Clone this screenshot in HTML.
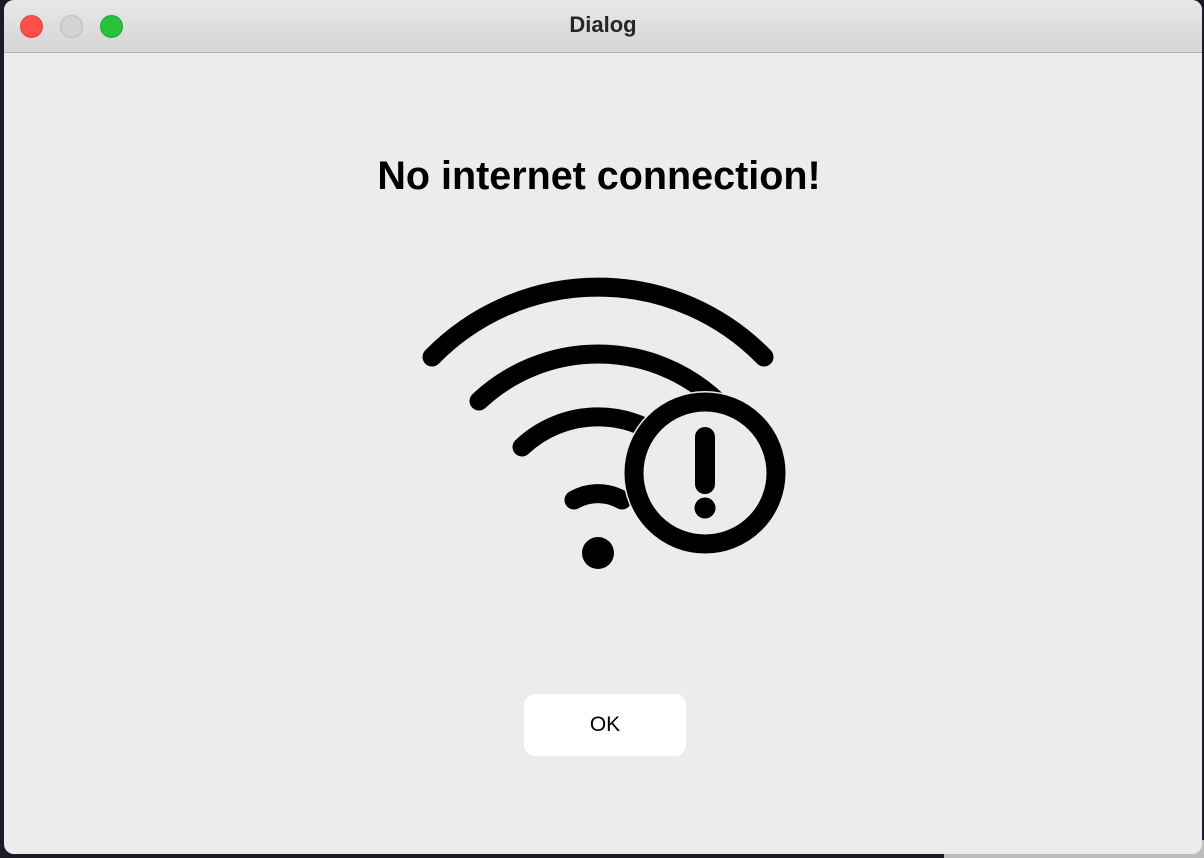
<!DOCTYPE html>
<html><head><meta charset="utf-8"><style>
html,body{margin:0;padding:0;width:1204px;height:858px;overflow:hidden;background:#1a1b26;}
.bg2{position:absolute;left:944px;top:840px;width:260px;height:18px;background:#bdbdbd;}
.win{position:absolute;left:4px;top:0;width:1198px;height:854px;background:#ececec;border-radius:10px;overflow:hidden;font-family:"Liberation Sans",sans-serif;}
.tb{position:absolute;left:0;top:0;width:100%;height:52px;background:linear-gradient(#e8e8e8,#d5d5d5);border-bottom:1px solid #b0b0b0;}
.tl{position:absolute;top:15px;width:23px;height:23px;border-radius:50%;box-sizing:border-box;}
.tt{position:absolute;left:0;width:100%;top:12px;text-align:center;font-weight:bold;font-size:22px;color:#262626;}
h1{position:absolute;left:0;width:1190px;top:154px;margin:0;text-align:center;font-size:39.5px;font-weight:bold;color:#000;}
.ok{position:absolute;left:520px;top:694px;width:162px;height:62px;background:#fff;border-radius:11px;text-align:center;line-height:62px;font-size:21px;color:#000;}
svg{position:absolute;left:0;top:0;}
</style></head><body>
<div class="bg2"></div>
<div class="win">
<div class="tb">
<div class="tl" style="left:16px;background:#fe4f4a;border:1px solid #e0443e"></div>
<div class="tl" style="left:56px;background:#d3d3d3;border:1px solid #bcbcbc"></div>
<div class="tl" style="left:96px;background:#29c23b;border:1px solid #1fa72f"></div>
<div class="tt">Dialog</div>
</div>
<h1>No internet connection!</h1>
<svg width="1198" height="854" viewBox="4 0 1198 854">
<g fill="none" stroke="#000" stroke-width="19" stroke-linecap="round">
<path d="M432 357 A232 232 0 0 1 764 357"/>
<path d="M479 401 A174 174 0 0 1 717 401"/>
<path d="M522 447 A111 111 0 0 1 674 447"/>
<path d="M574 500 A48 48 0 0 1 622 500"/>
</g>
<circle cx="598" cy="553" r="16" fill="#000"/>
<circle cx="705" cy="473" r="82" fill="#ececec"/>
<circle cx="705" cy="473" r="71" fill="none" stroke="#000" stroke-width="19"/>
<line x1="705" y1="437" x2="705" y2="484" stroke="#000" stroke-width="20" stroke-linecap="round"/>
<circle cx="705" cy="508" r="10.5" fill="#000"/>
</svg>
<div class="ok">OK</div>
</div>
</body></html>
